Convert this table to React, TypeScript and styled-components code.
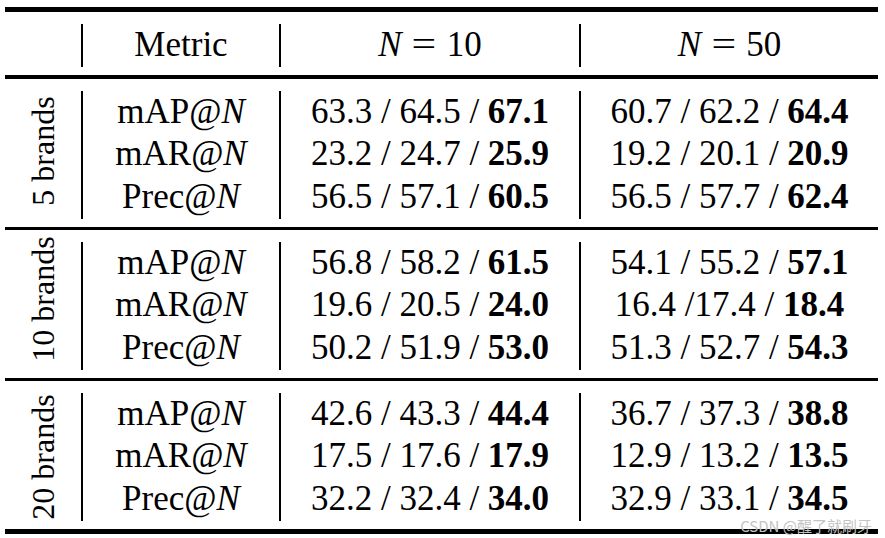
import React from 'react';
import styled, { createGlobalStyle } from 'styled-components';

type Triple = [string, string, string];

type Group = {
  label: string;
  shift: number;
  rows: { metric: string; n10: Triple; n50: Triple }[];
};

const groups: Group[] = [
  {
    label: '5 brands',
    shift: -4,
    rows: [
      { metric: 'mAP', n10: ['63.3', '64.5', '67.1'], n50: ['60.7', '62.2', '64.4'] },
      { metric: 'mAR', n10: ['23.2', '24.7', '25.9'], n50: ['19.2', '20.1', '20.9'] },
      { metric: 'Prec', n10: ['56.5', '57.1', '60.5'], n50: ['56.5', '57.7', '62.4'] },
    ],
  },
  {
    label: '10 brands',
    shift: -7,
    rows: [
      { metric: 'mAP', n10: ['56.8', '58.2', '61.5'], n50: ['54.1', '55.2', '57.1'] },
      { metric: 'mAR', n10: ['19.6', '20.5', '24.0'], n50: ['16.4', '/17.4', '18.4'] },
      { metric: 'Prec', n10: ['50.2', '51.9', '53.0'], n50: ['51.3', '52.7', '54.3'] },
    ],
  },
  {
    label: '20 brands',
    shift: 0,
    rows: [
      { metric: 'mAP', n10: ['42.6', '43.3', '44.4'], n50: ['36.7', '37.3', '38.8'] },
      { metric: 'mAR', n10: ['17.5', '17.6', '17.9'], n50: ['12.9', '13.2', '13.5'] },
      { metric: 'Prec', n10: ['32.2', '32.4', '34.0'], n50: ['32.9', '33.1', '34.5'] },
    ],
  },
];

// "16.4 /17.4" has no space in the source table
const Values: React.FC<{ v: Triple }> = ({ v }) =>
  v[1].startsWith('/') ? (
    <>
      {v[0]} {v[1]} / <b>{v[2]}</b>
    </>
  ) : (
    <>
      {v[0]} / {v[1]} / <b>{v[2]}</b>
    </>
  );

const App: React.FC = () => {
  return (
    <Page>
      <GlobalStyle />
      <Table>
        <Rule $h={5} />
        <Section>
          <LabelCell />
          <Col>
            <Line>Metric</Line>
          </Col>
          <Col>
            <Line>
              <I>N</I>
              <Eq>=</Eq>10
            </Line>
          </Col>
          <Col>
            <Line>
              <I>N</I>
              <Eq>=</Eq>50
            </Line>
          </Col>
        </Section>
        <Rule $h={4} />
        {groups.map((g, gi) => (
          <React.Fragment key={g.label}>
            <Section>
              <LabelCell>
                <Rotated $shift={g.shift}>{g.label}</Rotated>
              </LabelCell>
              <Col>
                {g.rows.map((r) => (
                  <Line key={r.metric}>
                    {r.metric}@<I>N</I>
                  </Line>
                ))}
              </Col>
              <Col>
                {g.rows.map((r) => (
                  <Line key={r.metric}>
                    <Values v={r.n10} />
                  </Line>
                ))}
              </Col>
              <Col>
                {g.rows.map((r) => (
                  <Line key={r.metric}>
                    <Values v={r.n50} />
                  </Line>
                ))}
              </Col>
            </Section>
            <Rule $h={gi === groups.length - 1 ? 5 : 3} />
          </React.Fragment>
        ))}
        <Watermark>CSDN @醒了就刷牙</Watermark>
      </Table>
    </Page>
  );
};

export default App;

const GlobalStyle = createGlobalStyle`
  html, body {
    margin: 0;
    padding: 0;
    background: #ffffff;
    font-family: 'Liberation Serif', serif;
  }
`;

const Page = styled.div`
  width: 885px;
  height: 538px;
  background: #fff;
  padding: 7px 7px 0 5px;
  box-sizing: border-box;
  color: #000;
`;

const Table = styled.div`
  position: relative;
  display: flex;
  flex-direction: column;
  width: 873px;
`;

const Rule = styled.div<{ $h: number }>`
  height: ${(p) => p.$h}px;
  background: #000;
`;

const Section = styled.div`
  display: grid;
  grid-template-columns: 76px 198px 300px 1fr;
  padding: 12px 0 8px;
`;

const LabelCell = styled.div`
  display: flex;
  align-items: center;
  justify-content: center;
`;

const Rotated = styled.div<{ $shift: number }>`
  font-family: 'Liberation Serif', serif;
  transform: translateY(${(p) => p.$shift}px) rotate(-90deg);
  white-space: nowrap;
  font-size: 32px;
  line-height: 1;
`;

const Col = styled.div`
  border-left: 2px solid #000;
  display: flex;
  flex-direction: column;
  align-items: center;
`;

const Line = styled.div`
  font-family: 'Liberation Serif', serif;
  height: 42.67px;
  line-height: 42.67px;
  font-size: 35px;
  white-space: nowrap;
  b {
    font-weight: 700;
  }
`;

const I = styled.i`
  font-style: italic;
`;

const Eq = styled.span`
  display: inline-block;
  margin: 0 0.36em;
  transform: scaleX(1.25);
`;

const Watermark = styled.div`
  position: absolute;
  right: 6px;
  bottom: 1px;
  font-family: 'Noto Sans CJK SC', 'Noto Sans', sans-serif;
  font-size: 15px;
  line-height: 1;
  color: #c4c4c4;
  white-space: nowrap;
`;
